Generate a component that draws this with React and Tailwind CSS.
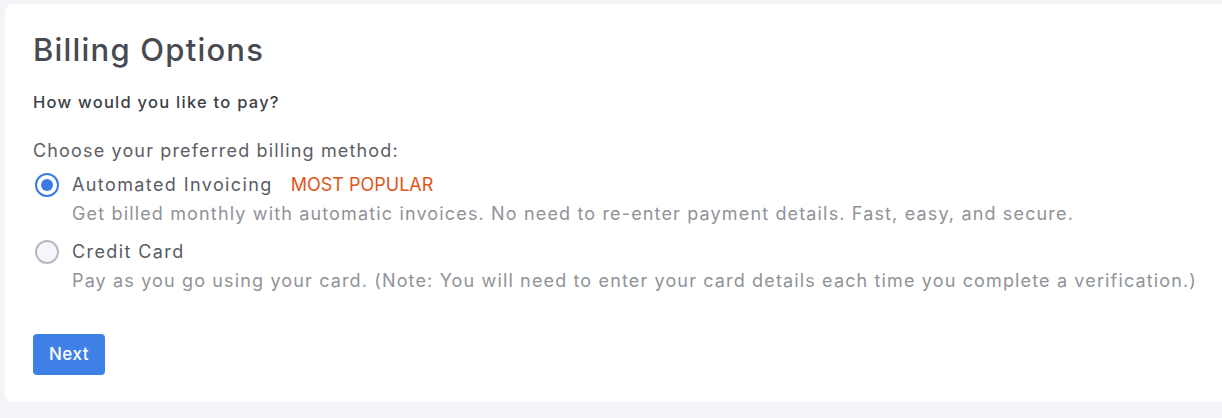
import React, { useState } from "react";

function Radio({ checked }) {
  return checked ? (
    <span className="flex h-[24px] w-[24px] shrink-0 items-center justify-center rounded-full border-[2.5px] border-[#3b7be3] bg-white">
      <span className="block h-[12px] w-[12px] rounded-full bg-[#3b7be3]" />
    </span>
  ) : (
    <span className="block h-[24px] w-[24px] shrink-0 rounded-full border-2 border-[#b7b9bd] bg-[#f4f6fb]" />
  );
}

export default function App() {
  const [method, setMethod] = useState("auto");
  const options = [
    {
      id: "auto",
      label: "Automated Invoicing",
      badge: "MOST POPULAR",
      desc: "Get billed monthly with automatic invoices. No need to re-enter payment details. Fast, easy, and secure.",
      track: "tracking-[1.15px]",
    },
    {
      id: "card",
      label: "Credit Card",
      desc: "Pay as you go using your card. (Note: You will need to enter your card details each time you complete a verification.)",
      track: "tracking-[1.14px]",
    },
  ];
  return (
    <div
      className="h-[418px] overflow-hidden bg-[#f3f4f7] pl-[5px] pt-[4px]"
      style={{ fontFamily: "Inter, 'Noto Sans', sans-serif" }}
    >
      <div className="h-[398px] w-[1230px] rounded-lg bg-white pl-[28px] pt-[28px]">
        <h1 className="text-[31px] font-medium leading-[36px] tracking-[1.2px] text-[#464a51]">
          Billing Options
        </h1>
        <p className="mt-[22px] text-[16.5px] font-medium leading-[24px] tracking-[1.25px] text-[#3b3f46]">
          How would you like to pay?
        </p>
        <p className="mt-[24px] text-[18px] leading-[26px] tracking-[1.15px] text-[#5c6066]">
          Choose your preferred billing method:
        </p>
        <div className="mt-[6px] flex flex-col gap-[9px]">
          {options.map((o) => (
            <div
              key={o.id}
              className="flex cursor-pointer gap-[13px]"
              onClick={() => setMethod(o.id)}
            >
              <div className="pt-[3px] pl-[2px]">
                <Radio checked={method === o.id} />
              </div>
              <div className="flex flex-col">
                <div className="flex items-center gap-[18px] text-[18px] leading-[29px]">
                  <span className="tracking-[1.4px] text-[#585c63]">{o.label}</span>
                  {o.badge && (
                    <span className="tracking-[0px] text-[#e1551c]">{o.badge}</span>
                  )}
                </div>
                <p className={`text-[18px] leading-[29px] text-[#909398] ${o.track}`}>
                  {o.desc}
                </p>
              </div>
            </div>
          ))}
        </div>
        <button className="mt-[39px] h-[41px] w-[72px] rounded-[4px] bg-[#3f80e6] text-[17px] font-medium tracking-[0.5px] text-white">
          Next
        </button>
      </div>
    </div>
  );
}
